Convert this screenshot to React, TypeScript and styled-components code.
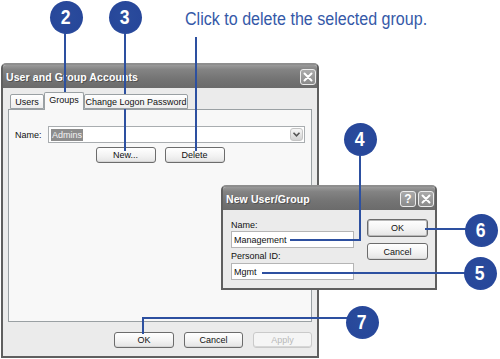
import React from "react";
import styled, { createGlobalStyle } from "styled-components";

const GlobalStyle = createGlobalStyle`
  html, body { margin: 0; padding: 0; background: #ffffff; }
  body {
    width: 500px;
    height: 359px;
    overflow: hidden;
    font-family: "Liberation Sans", Arial, sans-serif;
  }
`;

const Canvas = styled.div`
  position: relative;
  width: 500px;
  height: 359px;
  background: #ffffff;
  overflow: hidden;
`;

const Window = styled.div<{ $x: number; $y: number; $w: number; $h: number }>`
  position: absolute;
  left: ${(p) => p.$x}px;
  top: ${(p) => p.$y}px;
  width: ${(p) => p.$w}px;
  height: ${(p) => p.$h}px;
  box-sizing: border-box;
  display: flex;
  flex-direction: column;
  border: 2px solid #5f5f5f;
  border-top-color: #8e8e8e;
  border-radius: 5px 5px 0 0;
  background: #ebebeb;
  overflow: hidden;
`;

const TitleBar = styled.div`
  flex: none;
  height: 23px;
  display: flex;
  align-items: center;
  padding: 0 1px 0 3px;
  background: linear-gradient(#9a9a9a 0%, #838383 20%, #747474 60%, #6b6b6b 100%);
`;

const TitleText = styled.span`
  flex: 1;
  color: #ffffff;
  font: bold 10.5px "Liberation Sans", Arial, sans-serif;
  letter-spacing: 0.1px;
  text-shadow: 1px 1px 0 rgba(40, 40, 40, 0.45);
`;

const CaptionButtons = styled.div`
  display: flex;
  gap: 2px;
`;

const CaptionButton = styled.div`
  width: 16px;
  height: 16px;
  box-sizing: border-box;
  border: 1px solid #ececec;
  border-radius: 3px;
  background: linear-gradient(#aaaaaa, #8b8b8b);
  display: flex;
  align-items: center;
  justify-content: center;
  color: #ffffff;
  font: bold 12px "Liberation Sans", Arial, sans-serif;
`;

const MainBody = styled.div`
  flex: 1;
  display: flex;
  flex-direction: column;
  padding: 4px 5px 8px 5px;
  min-height: 0;
`;

const TabStrip = styled.div`
  flex: none;
  height: 17px;
  display: flex;
  align-items: flex-end;
  padding-left: 2px;
  position: relative;
  z-index: 1;
`;

const Tab = styled.div<{ $w: number; $active?: boolean }>`
  width: ${(p) => p.$w}px;
  height: ${(p) => (p.$active ? 18 : 15)}px;
  box-sizing: border-box;
  margin-bottom: ${(p) => (p.$active ? -1 : 0)}px;
  border: 1px solid #9aa0a3;
  border-bottom: ${(p) => (p.$active ? "none" : "1px solid #9aa0a3")};
  border-radius: 2px 2px 0 0;
  background: ${(p) =>
    p.$active ? "#f9f9f9" : "linear-gradient(#ffffff, #ededed)"};
  display: flex;
  align-items: center;
  justify-content: center;
  padding-bottom: ${(p) => (p.$active ? 3 : 0)}px;
  font-size: 9px;
  color: #111;
`;

const Panel = styled.div`
  flex: 1;
  display: flex;
  flex-direction: column;
  border: 1px solid #9aa0a3;
  background: #f8f8f8;
  padding: 16px 6px 0 6px;
`;

const FieldRow = styled.div`
  display: flex;
  align-items: center;
  height: 17px;
`;

const FieldLabel = styled.span<{ $w: number }>`
  width: ${(p) => p.$w}px;
  flex: none;
  font-size: 9px;
  color: #111;
`;

const Combo = styled.div`
  flex: 1;
  height: 17px;
  box-sizing: border-box;
  border: 1px solid #a9adb0;
  background: #ffffff;
  display: flex;
  align-items: center;
  padding-left: 2px;
`;

const Selected = styled.span`
  background: #8d8d8d;
  color: #f4f4f4;
  font-size: 9px;
  line-height: 12px;
  padding: 0 1px;
`;

const DropArrow = styled.div`
  margin-left: auto;
  margin-right: 1px;
  width: 13px;
  height: 13px;
  box-sizing: border-box;
  border: 1px solid #c4c4c4;
  border-radius: 3px;
  background: linear-gradient(#f7f7f7, #d2d2d2);
  display: flex;
  align-items: center;
  justify-content: center;
`;

const ButtonRow = styled.div<{ $justify: string; $gap: number; $mt: number }>`
  display: flex;
  justify-content: ${(p) => p.$justify};
  gap: ${(p) => p.$gap}px;
  margin-top: ${(p) => p.$mt}px;
`;

const Button = styled.div<{ $w: number; $h?: number; $disabled?: boolean; $default?: boolean }>`
  width: ${(p) => p.$w}px;
  height: ${(p) => p.$h ?? 16}px;
  box-sizing: border-box;
  border: 1px solid ${(p) => (p.$disabled ? "#cacaca" : "#6c6c6c")};
  border-radius: 3px;
  box-shadow: ${(p) =>
    p.$default ? "inset 0 0 0 1px #b9b9b9" : "inset 0 -1px 0 #d6d6d6"};
  background: ${(p) =>
    p.$disabled ? "#f5f5f5" : "linear-gradient(#ffffff, #f3f3f3 55%, #e4e4e4)"};
  display: flex;
  align-items: center;
  justify-content: center;
  font-size: 9px;
  color: ${(p) => (p.$disabled ? "#b9b9b9" : "#111")};
`;

const DialogBody = styled.div`
  flex: 1;
  display: flex;
  justify-content: space-between;
  padding: 8px 7px 0 8px;
`;

const FormColumn = styled.div`
  width: 123px;
  display: flex;
  flex-direction: column;
`;

const FormLabel = styled.div<{ $h: number }>`
  height: ${(p) => p.$h}px;
  display: flex;
  align-items: center;
  font-size: 9px;
  color: #111;
`;

const TextInput = styled.div`
  height: 17px;
  box-sizing: border-box;
  border: 1px solid #b5b5b5;
  background: #ffffff;
  display: flex;
  align-items: center;
  padding-left: 2px;
  font-size: 9px;
  color: #111;
`;

const ActionColumn = styled.div`
  width: 61px;
  padding-top: 1px;
  display: flex;
  flex-direction: column;
  gap: 6px;
`;

const Leaders = styled.svg`
  position: absolute;
  left: 0;
  top: 0;
  width: 500px;
  height: 359px;
  pointer-events: none;
`;

const Callout = styled.div<{ $cx: number; $cy: number }>`
  position: absolute;
  left: ${(p) => p.$cx - 16.5}px;
  top: ${(p) => p.$cy - 16.5}px;
  width: 33px;
  height: 33px;
  border-radius: 50%;
  background: radial-gradient(circle at 50% 45%, #2a4c9c 0%, #27479a 65%, #3a5eab 100%);
  display: flex;
  align-items: center;
  justify-content: center;
  color: #ffffff;
  font: bold 20px "Liberation Sans", Arial, sans-serif;
`;

const CalloutDigit = styled.span`
  display: inline-block;
  transform: scaleX(0.88);
`;

const Caption = styled.div`
  position: absolute;
  left: 185px;
  top: 9px;
  font: 18px "Liberation Sans", Arial, sans-serif;
  color: #3559a8;
  white-space: nowrap;
  transform: scaleX(0.893);
  transform-origin: left top;
`;

const CloseGlyph = () => (
  <svg width="10" height="10" viewBox="0 0 10 10">
    <path d="M1.5 1.5 L8.5 8.5 M8.5 1.5 L1.5 8.5" stroke="#fff" strokeWidth="2" strokeLinecap="round" />
  </svg>
);

const Chevron = () => (
  <svg width="9" height="7" viewBox="0 0 9 7">
    <path d="M1.5 1.8 L4.5 4.8 L7.5 1.8" stroke="#555" strokeWidth="1.6" fill="none" />
  </svg>
);

export default function App() {
  return (
    <Canvas>
      <GlobalStyle />

      <Window $x={1} $y={63} $w={318} $h={295}>
        <TitleBar>
          <TitleText>User and Group Accounts</TitleText>
          <CaptionButtons>
            <CaptionButton>
              <CloseGlyph />
            </CaptionButton>
          </CaptionButtons>
        </TitleBar>
        <MainBody>
          <TabStrip>
            <Tab $w={34}>Users</Tab>
            <Tab $w={40} $active>
              Groups
            </Tab>
            <Tab $w={104}>Change Logon Password</Tab>
          </TabStrip>
          <Panel>
            <FieldRow>
              <FieldLabel $w={33}>Name:</FieldLabel>
              <Combo>
                <Selected>Admins</Selected>
                <DropArrow>
                  <Chevron />
                </DropArrow>
              </Combo>
            </FieldRow>
            <ButtonRow $justify="center" $gap={9} $mt={4}>
              <Button $w={60}>New...</Button>
              <Button $w={60}>Delete</Button>
            </ButtonRow>
          </Panel>
          <ButtonRow $justify="flex-end" $gap={10} $mt={10}>
            <Button $w={60}>OK</Button>
            <Button $w={59}>Cancel</Button>
            <Button $w={59} $disabled>
              Apply
            </Button>
          </ButtonRow>
        </MainBody>
      </Window>

      <Window $x={221} $y={185} $w={216} $h={105}>
        <TitleBar>
          <TitleText>New User/Group</TitleText>
          <CaptionButtons>
            <CaptionButton>?</CaptionButton>
            <CaptionButton>
              <CloseGlyph />
            </CaptionButton>
          </CaptionButtons>
        </TitleBar>
        <DialogBody>
          <FormColumn>
            <FormLabel $h={13}>Name:</FormLabel>
            <TextInput>Management</TextInput>
            <FormLabel $h={15}>Personal ID:</FormLabel>
            <TextInput>Mgmt</TextInput>
          </FormColumn>
          <ActionColumn>
            <Button $w={61} $h={18} $default>
              OK
            </Button>
            <Button $w={61} $h={17}>
              Cancel
            </Button>
          </ActionColumn>
        </DialogBody>
      </Window>

      <Leaders viewBox="0 0 500 359">
        <g stroke="#2d50a0" strokeWidth="2" fill="none">
          <path d="M65 17 V97" />
          <path d="M125 17 V151" />
          <path d="M196 37 V151" />
          <path d="M360 139 V240 H290" />
          <path d="M425 229 H481" />
          <path d="M262 273 H480" />
          <path d="M362 318 H143 V334" />
        </g>
      </Leaders>

      <Callout $cx={66} $cy={17}>
        <CalloutDigit>2</CalloutDigit>
      </Callout>
      <Callout $cx={125} $cy={17}>
        <CalloutDigit>3</CalloutDigit>
      </Callout>
      <Callout $cx={360} $cy={139}>
        <CalloutDigit>4</CalloutDigit>
      </Callout>
      <Callout $cx={481} $cy={230}>
        <CalloutDigit>6</CalloutDigit>
      </Callout>
      <Callout $cx={480} $cy={273}>
        <CalloutDigit>5</CalloutDigit>
      </Callout>
      <Callout $cx={362} $cy={322}>
        <CalloutDigit>7</CalloutDigit>
      </Callout>

      <Caption>Click to delete the selected group.</Caption>
    </Canvas>
  );
}
